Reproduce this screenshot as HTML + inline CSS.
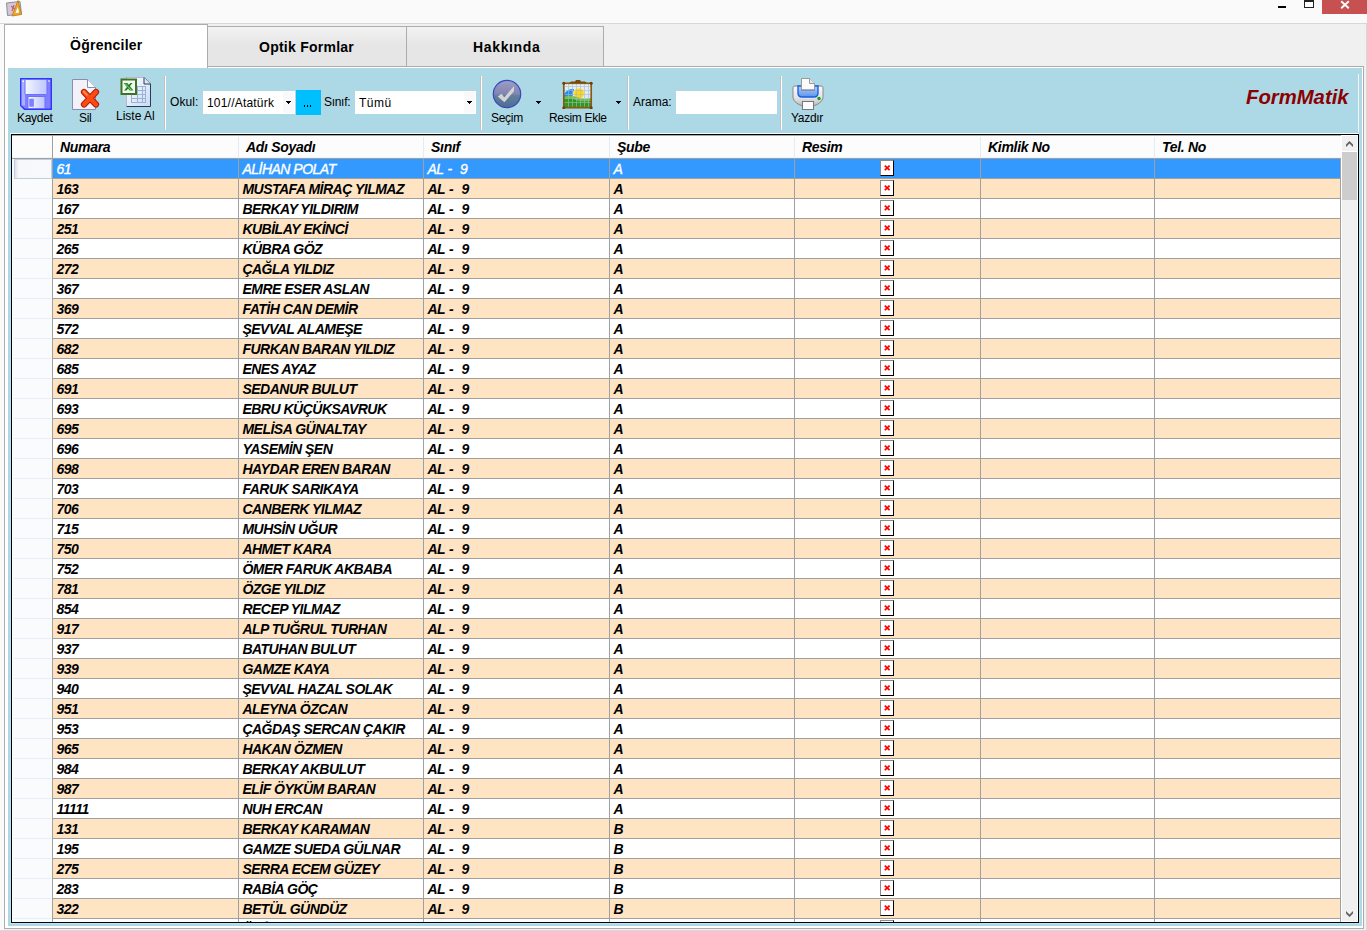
<!DOCTYPE html><html><head><meta charset="utf-8"><style>
*{margin:0;padding:0;box-sizing:border-box}
html,body{width:1367px;height:931px;overflow:hidden;background:#fafafa;font-family:"Liberation Sans",sans-serif;position:relative}
.abs{position:absolute}
#titleline{position:absolute;left:0;top:23px;width:1367px;height:1px;background:#d6d6d6}
#strip{position:absolute;left:0;top:24px;width:1367px;height:907px;background:#f0f0f0}
#winedge{position:absolute;left:1366px;top:24px;width:1px;height:907px;background:#d8d8d8}
#leftedge{position:absolute;left:0;top:24px;width:4px;height:907px;background:#fafafa}
#page{position:absolute;left:4px;top:66px;width:1360px;height:863px;border:1px solid #acacac;background:#fff}
#toolbar{position:absolute;left:8px;top:68px;width:1354px;height:858px;background:#add8e6}
.tab{position:absolute;border:1px solid #acacac;font-weight:bold;font-size:14px;letter-spacing:0.25px;color:#000;text-align:center;white-space:nowrap}
.tab.sel{left:4px;top:24px;width:204px;height:44px;border-bottom:none;background:#fff;z-index:3}
.tab.un{top:26px;height:41px;background:linear-gradient(#f2f2f2,#e6e6e6 45%,#e6e6e6)}
.tlbl{position:absolute;font-weight:bold;font-size:14px;letter-spacing:0.25px;white-space:nowrap;line-height:16px}
.tb{position:absolute;font-size:12px;letter-spacing:-0.3px;color:#000;white-space:nowrap;line-height:14px}
.sep{position:absolute;top:76px;width:2px;height:54px;border-left:1px solid #c8c0c0;border-right:1px solid #fff}
.combo{position:absolute;top:91px;height:23px;background:#fff}
.combo .dd{position:absolute;right:1px;top:1px;width:11px;height:21px;background:#f9f9f9}
.arrow{position:absolute;width:0;height:0;border-left:2.5px solid transparent;border-right:2.5px solid transparent;border-top:3px solid #000}
#grid{position:absolute;left:11px;top:134px;width:1348px;height:789px;border:1px solid #000;background:#fff;overflow:hidden;font-size:14px;letter-spacing:-0.3px;font-weight:bold;font-style:italic}
.hdr{position:absolute;left:0;top:0;width:1329px;height:24px;background:#fcfcfc;border-top:1px solid #ababab;border-bottom:1px solid #a0a0a0}
.hdr:after{content:"";position:absolute;left:0;top:21px;width:1329px;height:1px;background:#eef4fb}
.hc{position:absolute;top:-1px;height:23px;line-height:25px;padding-left:8px;white-space:nowrap}
.hc:before{content:"";position:absolute;left:0;top:2px;width:1px;height:20px;background:#e3ebf4}
.rhcol{position:absolute;left:0;top:24px;width:40px;height:770px;background:#fafbfc}
.vline52{position:absolute;left:40px;top:0;width:1px;height:790px;background:#a0a0a0;z-index:2}
.rh{position:absolute;left:2px;width:37px;height:20px;border-bottom:1px solid #e6eef8}
.rhsel{border:1px solid #c3cedd;background:linear-gradient(90deg,#dde4ee,#f6f8fb 4px,#f7f9fc);left:2px;width:38px;height:20px}
.row{letter-spacing:-0.5px;position:absolute;left:41px;width:1288px;height:20px;border-bottom:1px solid #a0a0a0;background:#fff;color:#000}
.row.alt{background:#ffe4c4}
.row.sel{background:#3399ff;color:#fff;font-weight:normal;-webkit-text-stroke:0.35px #fff}
.c{position:absolute;top:0;height:19px;line-height:21px;padding-left:3.4px;border-right:1px solid #a0a0a0;white-space:nowrap;overflow:hidden}
.c .t{position:relative;top:1px}
.bimg{position:absolute;left:85px;top:1px;width:14px;height:16px;background:#fff;border-top:1px solid #8c8c8c;border-left:1px solid #8c8c8c;border-right:1px solid #000;border-bottom:1px solid #000}
.bimg svg{position:absolute;left:3px;top:4px}
#vsb{position:absolute;left:1329px;top:0;width:17px;height:787px;background:#f0f0f0;border-left:1px solid #fff;border-right:1px solid #fff;border-top:1px solid #fff;border-bottom:1px solid #fff}
#vsb .thumb{position:absolute;left:0;top:16px;width:15px;height:48px;background:#cdcdcd}
#vsb .up,#vsb .dn{position:absolute;left:0;width:15px;height:15px}
#vsb .up{top:0;border-bottom:1px solid #fff;height:16px}
#vsb .dn{bottom:0}

#botedge{position:absolute;left:0;top:930px;width:1367px;height:1px;background:#d8d8d8}

</style></head><body>
<div id="titleline"></div>
<div id="strip"></div>
<div id="leftedge"></div>
<div id="winedge"></div>
<div id="botedge"></div>
<!-- app icon -->
<svg class="abs" style="left:5px;top:0px" width="18" height="17" viewBox="0 0 18 17">
  <path d="M1.5,3 L15,1.5 L16.5,14 L2.5,15.5 Z" fill="#c8ccd0" stroke="#8a9096" stroke-width="1"/>
  <path d="M4,4.5 L13,3.5 L14,12.5 L5,13.5 Z" fill="#f4b8e4"/>
  <path d="M6,6 L11,10 M9,5 L7,11" stroke="#8a7a60" stroke-width="1.2"/>
  <path d="M13,0.5 L7,16 L16.5,14.5 Z" fill="#e8a830" stroke="#c07810" stroke-width="0.8"/>
  <path d="M12.8,7 L10.5,13 L14,12.5 Z" fill="#ffffff"/>
</svg>
<!-- window buttons -->
<div class="abs" style="left:1278px;top:6px;width:8px;height:2px;background:#000"></div>
<div class="abs" style="left:1304px;top:0px;width:10px;height:8px;border:1px solid #222;border-top:2px solid #222;background:#fff"></div>
<div class="abs" style="left:1322px;top:0px;width:45px;height:14px;background:#c75050"></div>
<svg class="abs" style="left:1340px;top:0px" width="10" height="10" viewBox="0 0 10 10"><path d="M1.2,1.2 L8.8,8.2 M8.8,1.2 L1.2,8.2" stroke="#fff" stroke-width="1.9"/></svg>

<div id="page"></div>
<div id="toolbar"></div>
<div class="abs" style="left:10px;top:133px;width:1349px;height:1px;background:#f6fbfd"></div>
<div class="abs" style="left:10px;top:134px;width:1px;height:790px;background:#b8e3f3"></div>
<div class="abs" style="left:1359px;top:134px;width:1px;height:790px;background:#b8e3f3"></div>
<div class="abs" style="left:11px;top:923px;width:1348px;height:1px;background:#b8e3f3"></div>
<div class="tab un" style="left:207px;width:200px"></div>
<div class="tab un" style="left:406px;width:198px"></div>
<div class="tab sel"></div>
<div class="tlbl" style="left:70px;top:37px;z-index:4">Öğrenciler</div>
<div class="tlbl" style="left:259px;top:39px">Optik Formlar</div>
<div class="tlbl" style="left:473px;top:39px;letter-spacing:0.65px">Hakkında</div>

<!-- toolbar content -->
<svg class="abs" style="left:20px;top:78px" width="32" height="32" viewBox="0 0 32 32">
  <defs>
    <linearGradient id="flab" x1="0" x2="1"><stop offset="0" stop-color="#f6f8ff"/><stop offset="1" stop-color="#bcc4ff"/></linearGradient>
  </defs>
  <path d="M0.75,0.75 H31.25 V31.25 H4.5 L0.75,27.5 Z" fill="#7f80ff" stroke="#3434ff" stroke-width="1.5"/>
  <rect x="1.6" y="1.6" width="3.4" height="26" fill="#a8b0ff"/>
  <rect x="2.5" y="2.5" width="1.5" height="1.5" fill="#fff"/>
  <rect x="5" y="1.5" width="22" height="15" rx="0.8" fill="url(#flab)" stroke="#6a70ff" stroke-width="1"/>
  <rect x="28" y="2" width="2" height="2" fill="#b8c0ff"/>
  <rect x="8" y="18.5" width="17" height="12" fill="url(#flab)" stroke="#6a70ff" stroke-width="1"/>
  <rect x="9.2" y="20.8" width="4.7" height="8" rx="0.5" fill="#7f80ff"/>
</svg>
<div class="tb" style="left:17px;top:111px">Kaydet</div>

<svg class="abs" style="left:72px;top:79px" width="28" height="31" viewBox="0 0 28 31">
  <path d="M0.5,0.5 H15.5 L23.5,8.5 V30.5 H0.5 Z" fill="#f2f2f8" stroke="#8a8cb2" stroke-width="1"/>
  <path d="M15.5,0.5 V8.5 H23.5" fill="#fcfcff" stroke="#8a8cb2" stroke-width="1"/>
  <path d="M12,13 L24,25.5 M24,13 L12,25.5" stroke="#b01e08" stroke-width="6.2" stroke-linecap="round"/>
  <path d="M12,13 L24,25.5 M24,13 L12,25.5" stroke="#ff4a14" stroke-width="4.2" stroke-linecap="round"/>
  <path d="M11.6,12.4 L15,16" stroke="#ff9a60" stroke-width="1.6" stroke-linecap="round"/>
</svg>
<div class="tb" style="left:79px;top:111px">Sil</div>

<svg class="abs" style="left:120px;top:76px" width="32" height="32" viewBox="0 0 32 32">
  <defs><linearGradient id="xdoc" x1="0" y1="0" x2="1" y2="1"><stop offset="0" stop-color="#ffffff"/><stop offset="1" stop-color="#c8daf4"/></linearGradient></defs>
  <path d="M6.5,1.5 H24 L30.5,8 V30.5 H6.5 Z" fill="url(#xdoc)" stroke="#2a3a5a" stroke-width="1"/>
  <path d="M6.5,30.5 V1.5 H24" fill="none" stroke="#b4bccc" stroke-width="1"/>
  <path d="M24,1.5 V8 H30.5" fill="#dfe6f2" stroke="#2a3a5a" stroke-width="1"/>
  <g stroke="#9ab2d8" stroke-width="1" fill="none">
    <path d="M11,10.5 H26 M11,14.5 H26 M11,18.5 H26 M11,22.5 H26 M11,26.5 H26"/>
    <path d="M11.5,10 V27 M17.5,10 V27 M22.5,10 V27 M25.5,10 V27"/>
  </g>
  <rect x="1.5" y="3.5" width="14.5" height="14.5" fill="#f4faf2" stroke="#3c7424" stroke-width="2"/>
  <path d="M3.5,7 H7.5 L13.5,14.5 H9.5 Z" fill="#2a9a2a"/><path d="M12.5,7 H10.5 L4,14.5 H6.5 Z" fill="#1f7a1f"/><path d="M5,7.6 L11,14" stroke="#9ad89a" stroke-width="0.8"/>
</svg>
<div class="tb" style="left:116px;top:109px;letter-spacing:0px">Liste Al</div>

<div class="sep" style="left:164px"></div>
<div class="tb" style="left:170px;top:95px;letter-spacing:0.1px">Okul:</div>
<div class="combo" style="left:203px;width:92px"><div class="dd"></div></div><svg class="abs" style="left:286px;top:101px" width="5" height="3" shape-rendering="crispEdges"><path d="M0,0H5V1H4V2H3V3H2V2H1V1H0Z" fill="#000"/></svg>
<div class="tb" style="left:207px;top:96px;letter-spacing:0.2px">101//Atatürk</div>
<div class="abs" style="left:296px;top:90px;width:25px;height:25px;background:#00bfff"></div>
<div class="abs" style="left:304px;top:105px;width:1px;height:2px;background:#000"></div>
<div class="abs" style="left:307px;top:105px;width:1px;height:2px;background:#000"></div>
<div class="abs" style="left:310px;top:105px;width:1px;height:2px;background:#000"></div>
<div class="tb" style="left:324px;top:95px">Sınıf:</div>
<div class="combo" style="left:355px;width:121px"><div class="dd"></div></div><svg class="abs" style="left:467px;top:101px" width="5" height="3" shape-rendering="crispEdges"><path d="M0,0H5V1H4V2H3V3H2V2H1V1H0Z" fill="#000"/></svg>
<div class="tb" style="left:359px;top:96px;letter-spacing:0.5px">Tümü</div>

<div class="sep" style="left:480px"></div>
<svg class="abs" style="left:492px;top:79px" width="30" height="30" viewBox="0 0 30 30">
  <defs>
    <linearGradient id="cg" x1="0" y1="0" x2="0" y2="1"><stop offset="0" stop-color="#9a9ec4"/><stop offset="0.5" stop-color="#8484b4"/><stop offset="0.55" stop-color="#62809c"/><stop offset="1" stop-color="#4e6c94"/></linearGradient>
  </defs>
  <circle cx="15" cy="15" r="13.7" fill="url(#cg)" stroke="#3848bc" stroke-width="1.2"/>
  <path d="M5.7,17.4 L9.7,14.8 L12.2,18.5 L22,7 L22,12.2 L12.4,23.2 Z" fill="#d4d4d4"/>
</svg>
<svg class="abs" style="left:536px;top:101px" width="5" height="3" shape-rendering="crispEdges"><path d="M0,0H5V1H4V2H3V3H2V2H1V1H0Z" fill="#000"/></svg>
<div class="tb" style="left:491px;top:111px">Seçim</div>

<svg class="abs" style="left:562px;top:79px" width="32" height="30" viewBox="0 0 32 30">
  <defs>
    <linearGradient id="sky" x1="0" y1="0" x2="0" y2="1"><stop offset="0" stop-color="#e4f2fc"/><stop offset="1" stop-color="#c8e6f8"/></linearGradient>
    <radialGradient id="sun" cx="0.5" cy="0.5" r="0.5"><stop offset="0" stop-color="#ffe000"/><stop offset="0.7" stop-color="#ffd21a"/><stop offset="1" stop-color="#fff0b0"/></radialGradient>
  </defs>
  <rect x="2" y="5" width="27" height="23" fill="url(#sky)"/>
  <path d="M2,15.5 Q5,9.5 12,10 L11,17 L2,18 Z" fill="#2090f0"/>
  <circle cx="17" cy="14.5" r="5.8" fill="url(#sun)"/>
  <path d="M2,18 Q9,15.5 16,18.5 Q22,21 29,19 V28 H2 Z" fill="#6cc050"/>
  <path d="M2,20 Q8,18 15,21.5 Q21,23 29,22 V28 H2 Z" fill="#2c9a1a"/>
  <g stroke="#b0b8c0" stroke-width="0.8" opacity="0.75">
    <path d="M6.5,5 V28 M10.5,5 V28 M14.5,5 V28 M18.5,5 V28 M22.5,5 V28 M26.5,5 V28"/>
    <path d="M2,7.5 H29 M2,11.5 H29 M2,15.5 H29 M2,19.5 H29 M2,23.5 H29"/>
  </g>
  <rect x="1.8" y="4.3" width="27.4" height="24.4" fill="none" stroke="#8a5a14" stroke-width="1.7"/>
  <path d="M7,4 L9,2.5 H13 L14,1 H18 L19,2.5 H23 L25,4 Z" fill="#7a4a0c"/>
  <circle cx="1.8" cy="4.3" r="1.5" fill="#6a400a"/><circle cx="29.2" cy="4.3" r="1.5" fill="#6a400a"/>
  <circle cx="1.8" cy="28.7" r="1.5" fill="#6a400a"/><circle cx="29.2" cy="28.7" r="1.5" fill="#6a400a"/>
</svg>
<svg class="abs" style="left:616px;top:101px" width="5" height="3" shape-rendering="crispEdges"><path d="M0,0H5V1H4V2H3V3H2V2H1V1H0Z" fill="#000"/></svg>
<div class="tb" style="left:549px;top:111px">Resim Ekle</div>

<div class="sep" style="left:627px"></div>
<div class="tb" style="left:633px;top:95px;letter-spacing:0px">Arama:</div>
<div class="abs" style="left:676px;top:91px;width:101px;height:23px;background:#fff"></div>
<div class="sep" style="left:780px"></div>

<svg class="abs" style="left:791px;top:77px" width="34" height="34" viewBox="0 0 34 34">
  <defs>
    <linearGradient id="pb" x1="0" y1="0" x2="0" y2="1"><stop offset="0" stop-color="#fafafa"/><stop offset="0.6" stop-color="#e4e4e4"/><stop offset="1" stop-color="#b8b8b8"/></linearGradient>
    <linearGradient id="pt" x1="0" y1="0" x2="0" y2="1"><stop offset="0" stop-color="#b4d0fa"/><stop offset="1" stop-color="#5a94ec"/></linearGradient>
  </defs>
  <path d="M2,10.5 Q2,9 4,9 H30 Q32,9 32,10.5 V21 Q30,27 22,29 H12 Q4,27 2,21 Z" fill="url(#pb)" stroke="#888" stroke-width="1"/>
  <path d="M7,9 H27 V16 Q27,20 23,20 H11 Q7,20 7,16 Z" fill="url(#pt)" stroke="#1a5ee8" stroke-width="1.4"/>
  <path d="M10.5,1.5 H18.5 L23.5,6.5 V13 H10.5 Z" fill="#fbfbfb" stroke="#9a9a9a" stroke-width="1"/>
  <path d="M18.5,1.5 V6.5 H23.5" fill="#e8e8e8" stroke="#9a9a9a" stroke-width="1"/>
  <rect x="10" y="12.5" width="14" height="1.5" fill="#8a8ab0"/>
  <circle cx="28" cy="21.5" r="1.7" fill="#10a010"/>
  <rect x="11.5" y="24.5" width="11" height="8" fill="#fdfdfd" stroke="#777" stroke-width="1"/>
</svg>
<div class="tb" style="left:791px;top:111px">Yazdır</div>

<div class="abs" style="left:1358px;top:74px;width:1px;height:58px;background:#f4f4f4"></div>
<div class="abs" style="left:1246px;top:85px;font-size:20.3px;font-weight:bold;font-style:italic;color:#8b0000;line-height:24px;white-space:nowrap">FormMatik</div>

<div id="grid">
<div class="rhcol"></div><div class="vline52"></div>
<div class="hdr">
<div class="hc" style="left:40px;width:186px"><span>Numara</span></div>
<div class="hc" style="left:226px;width:185px"><span>Adı Soyadı</span></div>
<div class="hc" style="left:411px;width:186px"><span>Sınıf</span></div>
<div class="hc" style="left:597px;width:185px"><span>Şube</span></div>
<div class="hc" style="left:782px;width:186px"><span>Resim</span></div>
<div class="hc" style="left:968px;width:174px"><span>Kimlik No</span></div>
<div class="hc" style="left:1142px;width:186px"><span>Tel. No</span></div>
</div>
<div class="rh rhsel" style="top:24px"></div>
<div class="row sel" style="top:24px">
<div class="c" style="left:0px;width:186px">61</div>
<div class="c" style="left:186px;width:185px">ALİHAN POLAT</div>
<div class="c" style="left:371px;width:186px;word-spacing:0.8px">AL -&nbsp; 9</div>
<div class="c" style="left:557px;width:185px">A</div>
<div class="c" style="left:742px;width:186px"><i class="bimg"><svg width="7" height="7"><path d="M0.8,0.6 L5.6,5.2 M5.6,0.6 L0.8,5.2" stroke="#f00" stroke-width="1.7"/></svg></i></div>
<div class="c" style="left:928px;width:174px"></div>
<div class="c" style="left:1102px;width:186px"></div>
</div>
<div class="rh" style="top:44px"></div>
<div class="row alt" style="top:44px">
<div class="c" style="left:0px;width:186px">163</div>
<div class="c" style="left:186px;width:185px">MUSTAFA MİRAÇ YILMAZ</div>
<div class="c" style="left:371px;width:186px;word-spacing:0.8px">AL -&nbsp; 9</div>
<div class="c" style="left:557px;width:185px">A</div>
<div class="c" style="left:742px;width:186px"><i class="bimg"><svg width="7" height="7"><path d="M0.8,0.6 L5.6,5.2 M5.6,0.6 L0.8,5.2" stroke="#f00" stroke-width="1.7"/></svg></i></div>
<div class="c" style="left:928px;width:174px"></div>
<div class="c" style="left:1102px;width:186px"></div>
</div>
<div class="rh" style="top:64px"></div>
<div class="row" style="top:64px">
<div class="c" style="left:0px;width:186px">167</div>
<div class="c" style="left:186px;width:185px">BERKAY YILDIRIM</div>
<div class="c" style="left:371px;width:186px;word-spacing:0.8px">AL -&nbsp; 9</div>
<div class="c" style="left:557px;width:185px">A</div>
<div class="c" style="left:742px;width:186px"><i class="bimg"><svg width="7" height="7"><path d="M0.8,0.6 L5.6,5.2 M5.6,0.6 L0.8,5.2" stroke="#f00" stroke-width="1.7"/></svg></i></div>
<div class="c" style="left:928px;width:174px"></div>
<div class="c" style="left:1102px;width:186px"></div>
</div>
<div class="rh" style="top:84px"></div>
<div class="row alt" style="top:84px">
<div class="c" style="left:0px;width:186px">251</div>
<div class="c" style="left:186px;width:185px">KUBİLAY EKİNCİ</div>
<div class="c" style="left:371px;width:186px;word-spacing:0.8px">AL -&nbsp; 9</div>
<div class="c" style="left:557px;width:185px">A</div>
<div class="c" style="left:742px;width:186px"><i class="bimg"><svg width="7" height="7"><path d="M0.8,0.6 L5.6,5.2 M5.6,0.6 L0.8,5.2" stroke="#f00" stroke-width="1.7"/></svg></i></div>
<div class="c" style="left:928px;width:174px"></div>
<div class="c" style="left:1102px;width:186px"></div>
</div>
<div class="rh" style="top:104px"></div>
<div class="row" style="top:104px">
<div class="c" style="left:0px;width:186px">265</div>
<div class="c" style="left:186px;width:185px">KÜBRA GÖZ</div>
<div class="c" style="left:371px;width:186px;word-spacing:0.8px">AL -&nbsp; 9</div>
<div class="c" style="left:557px;width:185px">A</div>
<div class="c" style="left:742px;width:186px"><i class="bimg"><svg width="7" height="7"><path d="M0.8,0.6 L5.6,5.2 M5.6,0.6 L0.8,5.2" stroke="#f00" stroke-width="1.7"/></svg></i></div>
<div class="c" style="left:928px;width:174px"></div>
<div class="c" style="left:1102px;width:186px"></div>
</div>
<div class="rh" style="top:124px"></div>
<div class="row alt" style="top:124px">
<div class="c" style="left:0px;width:186px">272</div>
<div class="c" style="left:186px;width:185px">ÇAĞLA YILDIZ</div>
<div class="c" style="left:371px;width:186px;word-spacing:0.8px">AL -&nbsp; 9</div>
<div class="c" style="left:557px;width:185px">A</div>
<div class="c" style="left:742px;width:186px"><i class="bimg"><svg width="7" height="7"><path d="M0.8,0.6 L5.6,5.2 M5.6,0.6 L0.8,5.2" stroke="#f00" stroke-width="1.7"/></svg></i></div>
<div class="c" style="left:928px;width:174px"></div>
<div class="c" style="left:1102px;width:186px"></div>
</div>
<div class="rh" style="top:144px"></div>
<div class="row" style="top:144px">
<div class="c" style="left:0px;width:186px">367</div>
<div class="c" style="left:186px;width:185px">EMRE ESER ASLAN</div>
<div class="c" style="left:371px;width:186px;word-spacing:0.8px">AL -&nbsp; 9</div>
<div class="c" style="left:557px;width:185px">A</div>
<div class="c" style="left:742px;width:186px"><i class="bimg"><svg width="7" height="7"><path d="M0.8,0.6 L5.6,5.2 M5.6,0.6 L0.8,5.2" stroke="#f00" stroke-width="1.7"/></svg></i></div>
<div class="c" style="left:928px;width:174px"></div>
<div class="c" style="left:1102px;width:186px"></div>
</div>
<div class="rh" style="top:164px"></div>
<div class="row alt" style="top:164px">
<div class="c" style="left:0px;width:186px">369</div>
<div class="c" style="left:186px;width:185px">FATİH CAN DEMİR</div>
<div class="c" style="left:371px;width:186px;word-spacing:0.8px">AL -&nbsp; 9</div>
<div class="c" style="left:557px;width:185px">A</div>
<div class="c" style="left:742px;width:186px"><i class="bimg"><svg width="7" height="7"><path d="M0.8,0.6 L5.6,5.2 M5.6,0.6 L0.8,5.2" stroke="#f00" stroke-width="1.7"/></svg></i></div>
<div class="c" style="left:928px;width:174px"></div>
<div class="c" style="left:1102px;width:186px"></div>
</div>
<div class="rh" style="top:184px"></div>
<div class="row" style="top:184px">
<div class="c" style="left:0px;width:186px">572</div>
<div class="c" style="left:186px;width:185px">ŞEVVAL ALAMEŞE</div>
<div class="c" style="left:371px;width:186px;word-spacing:0.8px">AL -&nbsp; 9</div>
<div class="c" style="left:557px;width:185px">A</div>
<div class="c" style="left:742px;width:186px"><i class="bimg"><svg width="7" height="7"><path d="M0.8,0.6 L5.6,5.2 M5.6,0.6 L0.8,5.2" stroke="#f00" stroke-width="1.7"/></svg></i></div>
<div class="c" style="left:928px;width:174px"></div>
<div class="c" style="left:1102px;width:186px"></div>
</div>
<div class="rh" style="top:204px"></div>
<div class="row alt" style="top:204px">
<div class="c" style="left:0px;width:186px">682</div>
<div class="c" style="left:186px;width:185px">FURKAN BARAN YILDIZ</div>
<div class="c" style="left:371px;width:186px;word-spacing:0.8px">AL -&nbsp; 9</div>
<div class="c" style="left:557px;width:185px">A</div>
<div class="c" style="left:742px;width:186px"><i class="bimg"><svg width="7" height="7"><path d="M0.8,0.6 L5.6,5.2 M5.6,0.6 L0.8,5.2" stroke="#f00" stroke-width="1.7"/></svg></i></div>
<div class="c" style="left:928px;width:174px"></div>
<div class="c" style="left:1102px;width:186px"></div>
</div>
<div class="rh" style="top:224px"></div>
<div class="row" style="top:224px">
<div class="c" style="left:0px;width:186px">685</div>
<div class="c" style="left:186px;width:185px">ENES AYAZ</div>
<div class="c" style="left:371px;width:186px;word-spacing:0.8px">AL -&nbsp; 9</div>
<div class="c" style="left:557px;width:185px">A</div>
<div class="c" style="left:742px;width:186px"><i class="bimg"><svg width="7" height="7"><path d="M0.8,0.6 L5.6,5.2 M5.6,0.6 L0.8,5.2" stroke="#f00" stroke-width="1.7"/></svg></i></div>
<div class="c" style="left:928px;width:174px"></div>
<div class="c" style="left:1102px;width:186px"></div>
</div>
<div class="rh" style="top:244px"></div>
<div class="row alt" style="top:244px">
<div class="c" style="left:0px;width:186px">691</div>
<div class="c" style="left:186px;width:185px">SEDANUR BULUT</div>
<div class="c" style="left:371px;width:186px;word-spacing:0.8px">AL -&nbsp; 9</div>
<div class="c" style="left:557px;width:185px">A</div>
<div class="c" style="left:742px;width:186px"><i class="bimg"><svg width="7" height="7"><path d="M0.8,0.6 L5.6,5.2 M5.6,0.6 L0.8,5.2" stroke="#f00" stroke-width="1.7"/></svg></i></div>
<div class="c" style="left:928px;width:174px"></div>
<div class="c" style="left:1102px;width:186px"></div>
</div>
<div class="rh" style="top:264px"></div>
<div class="row" style="top:264px">
<div class="c" style="left:0px;width:186px">693</div>
<div class="c" style="left:186px;width:185px">EBRU KÜÇÜKSAVRUK</div>
<div class="c" style="left:371px;width:186px;word-spacing:0.8px">AL -&nbsp; 9</div>
<div class="c" style="left:557px;width:185px">A</div>
<div class="c" style="left:742px;width:186px"><i class="bimg"><svg width="7" height="7"><path d="M0.8,0.6 L5.6,5.2 M5.6,0.6 L0.8,5.2" stroke="#f00" stroke-width="1.7"/></svg></i></div>
<div class="c" style="left:928px;width:174px"></div>
<div class="c" style="left:1102px;width:186px"></div>
</div>
<div class="rh" style="top:284px"></div>
<div class="row alt" style="top:284px">
<div class="c" style="left:0px;width:186px">695</div>
<div class="c" style="left:186px;width:185px">MELİSA GÜNALTAY</div>
<div class="c" style="left:371px;width:186px;word-spacing:0.8px">AL -&nbsp; 9</div>
<div class="c" style="left:557px;width:185px">A</div>
<div class="c" style="left:742px;width:186px"><i class="bimg"><svg width="7" height="7"><path d="M0.8,0.6 L5.6,5.2 M5.6,0.6 L0.8,5.2" stroke="#f00" stroke-width="1.7"/></svg></i></div>
<div class="c" style="left:928px;width:174px"></div>
<div class="c" style="left:1102px;width:186px"></div>
</div>
<div class="rh" style="top:304px"></div>
<div class="row" style="top:304px">
<div class="c" style="left:0px;width:186px">696</div>
<div class="c" style="left:186px;width:185px">YASEMİN ŞEN</div>
<div class="c" style="left:371px;width:186px;word-spacing:0.8px">AL -&nbsp; 9</div>
<div class="c" style="left:557px;width:185px">A</div>
<div class="c" style="left:742px;width:186px"><i class="bimg"><svg width="7" height="7"><path d="M0.8,0.6 L5.6,5.2 M5.6,0.6 L0.8,5.2" stroke="#f00" stroke-width="1.7"/></svg></i></div>
<div class="c" style="left:928px;width:174px"></div>
<div class="c" style="left:1102px;width:186px"></div>
</div>
<div class="rh" style="top:324px"></div>
<div class="row alt" style="top:324px">
<div class="c" style="left:0px;width:186px">698</div>
<div class="c" style="left:186px;width:185px">HAYDAR EREN BARAN</div>
<div class="c" style="left:371px;width:186px;word-spacing:0.8px">AL -&nbsp; 9</div>
<div class="c" style="left:557px;width:185px">A</div>
<div class="c" style="left:742px;width:186px"><i class="bimg"><svg width="7" height="7"><path d="M0.8,0.6 L5.6,5.2 M5.6,0.6 L0.8,5.2" stroke="#f00" stroke-width="1.7"/></svg></i></div>
<div class="c" style="left:928px;width:174px"></div>
<div class="c" style="left:1102px;width:186px"></div>
</div>
<div class="rh" style="top:344px"></div>
<div class="row" style="top:344px">
<div class="c" style="left:0px;width:186px">703</div>
<div class="c" style="left:186px;width:185px">FARUK SARIKAYA</div>
<div class="c" style="left:371px;width:186px;word-spacing:0.8px">AL -&nbsp; 9</div>
<div class="c" style="left:557px;width:185px">A</div>
<div class="c" style="left:742px;width:186px"><i class="bimg"><svg width="7" height="7"><path d="M0.8,0.6 L5.6,5.2 M5.6,0.6 L0.8,5.2" stroke="#f00" stroke-width="1.7"/></svg></i></div>
<div class="c" style="left:928px;width:174px"></div>
<div class="c" style="left:1102px;width:186px"></div>
</div>
<div class="rh" style="top:364px"></div>
<div class="row alt" style="top:364px">
<div class="c" style="left:0px;width:186px">706</div>
<div class="c" style="left:186px;width:185px">CANBERK YILMAZ</div>
<div class="c" style="left:371px;width:186px;word-spacing:0.8px">AL -&nbsp; 9</div>
<div class="c" style="left:557px;width:185px">A</div>
<div class="c" style="left:742px;width:186px"><i class="bimg"><svg width="7" height="7"><path d="M0.8,0.6 L5.6,5.2 M5.6,0.6 L0.8,5.2" stroke="#f00" stroke-width="1.7"/></svg></i></div>
<div class="c" style="left:928px;width:174px"></div>
<div class="c" style="left:1102px;width:186px"></div>
</div>
<div class="rh" style="top:384px"></div>
<div class="row" style="top:384px">
<div class="c" style="left:0px;width:186px">715</div>
<div class="c" style="left:186px;width:185px">MUHSİN UĞUR</div>
<div class="c" style="left:371px;width:186px;word-spacing:0.8px">AL -&nbsp; 9</div>
<div class="c" style="left:557px;width:185px">A</div>
<div class="c" style="left:742px;width:186px"><i class="bimg"><svg width="7" height="7"><path d="M0.8,0.6 L5.6,5.2 M5.6,0.6 L0.8,5.2" stroke="#f00" stroke-width="1.7"/></svg></i></div>
<div class="c" style="left:928px;width:174px"></div>
<div class="c" style="left:1102px;width:186px"></div>
</div>
<div class="rh" style="top:404px"></div>
<div class="row alt" style="top:404px">
<div class="c" style="left:0px;width:186px">750</div>
<div class="c" style="left:186px;width:185px">AHMET KARA</div>
<div class="c" style="left:371px;width:186px;word-spacing:0.8px">AL -&nbsp; 9</div>
<div class="c" style="left:557px;width:185px">A</div>
<div class="c" style="left:742px;width:186px"><i class="bimg"><svg width="7" height="7"><path d="M0.8,0.6 L5.6,5.2 M5.6,0.6 L0.8,5.2" stroke="#f00" stroke-width="1.7"/></svg></i></div>
<div class="c" style="left:928px;width:174px"></div>
<div class="c" style="left:1102px;width:186px"></div>
</div>
<div class="rh" style="top:424px"></div>
<div class="row" style="top:424px">
<div class="c" style="left:0px;width:186px">752</div>
<div class="c" style="left:186px;width:185px">ÖMER FARUK AKBABA</div>
<div class="c" style="left:371px;width:186px;word-spacing:0.8px">AL -&nbsp; 9</div>
<div class="c" style="left:557px;width:185px">A</div>
<div class="c" style="left:742px;width:186px"><i class="bimg"><svg width="7" height="7"><path d="M0.8,0.6 L5.6,5.2 M5.6,0.6 L0.8,5.2" stroke="#f00" stroke-width="1.7"/></svg></i></div>
<div class="c" style="left:928px;width:174px"></div>
<div class="c" style="left:1102px;width:186px"></div>
</div>
<div class="rh" style="top:444px"></div>
<div class="row alt" style="top:444px">
<div class="c" style="left:0px;width:186px">781</div>
<div class="c" style="left:186px;width:185px">ÖZGE YILDIZ</div>
<div class="c" style="left:371px;width:186px;word-spacing:0.8px">AL -&nbsp; 9</div>
<div class="c" style="left:557px;width:185px">A</div>
<div class="c" style="left:742px;width:186px"><i class="bimg"><svg width="7" height="7"><path d="M0.8,0.6 L5.6,5.2 M5.6,0.6 L0.8,5.2" stroke="#f00" stroke-width="1.7"/></svg></i></div>
<div class="c" style="left:928px;width:174px"></div>
<div class="c" style="left:1102px;width:186px"></div>
</div>
<div class="rh" style="top:464px"></div>
<div class="row" style="top:464px">
<div class="c" style="left:0px;width:186px">854</div>
<div class="c" style="left:186px;width:185px">RECEP YILMAZ</div>
<div class="c" style="left:371px;width:186px;word-spacing:0.8px">AL -&nbsp; 9</div>
<div class="c" style="left:557px;width:185px">A</div>
<div class="c" style="left:742px;width:186px"><i class="bimg"><svg width="7" height="7"><path d="M0.8,0.6 L5.6,5.2 M5.6,0.6 L0.8,5.2" stroke="#f00" stroke-width="1.7"/></svg></i></div>
<div class="c" style="left:928px;width:174px"></div>
<div class="c" style="left:1102px;width:186px"></div>
</div>
<div class="rh" style="top:484px"></div>
<div class="row alt" style="top:484px">
<div class="c" style="left:0px;width:186px">917</div>
<div class="c" style="left:186px;width:185px">ALP TUĞRUL TURHAN</div>
<div class="c" style="left:371px;width:186px;word-spacing:0.8px">AL -&nbsp; 9</div>
<div class="c" style="left:557px;width:185px">A</div>
<div class="c" style="left:742px;width:186px"><i class="bimg"><svg width="7" height="7"><path d="M0.8,0.6 L5.6,5.2 M5.6,0.6 L0.8,5.2" stroke="#f00" stroke-width="1.7"/></svg></i></div>
<div class="c" style="left:928px;width:174px"></div>
<div class="c" style="left:1102px;width:186px"></div>
</div>
<div class="rh" style="top:504px"></div>
<div class="row" style="top:504px">
<div class="c" style="left:0px;width:186px">937</div>
<div class="c" style="left:186px;width:185px">BATUHAN BULUT</div>
<div class="c" style="left:371px;width:186px;word-spacing:0.8px">AL -&nbsp; 9</div>
<div class="c" style="left:557px;width:185px">A</div>
<div class="c" style="left:742px;width:186px"><i class="bimg"><svg width="7" height="7"><path d="M0.8,0.6 L5.6,5.2 M5.6,0.6 L0.8,5.2" stroke="#f00" stroke-width="1.7"/></svg></i></div>
<div class="c" style="left:928px;width:174px"></div>
<div class="c" style="left:1102px;width:186px"></div>
</div>
<div class="rh" style="top:524px"></div>
<div class="row alt" style="top:524px">
<div class="c" style="left:0px;width:186px">939</div>
<div class="c" style="left:186px;width:185px">GAMZE KAYA</div>
<div class="c" style="left:371px;width:186px;word-spacing:0.8px">AL -&nbsp; 9</div>
<div class="c" style="left:557px;width:185px">A</div>
<div class="c" style="left:742px;width:186px"><i class="bimg"><svg width="7" height="7"><path d="M0.8,0.6 L5.6,5.2 M5.6,0.6 L0.8,5.2" stroke="#f00" stroke-width="1.7"/></svg></i></div>
<div class="c" style="left:928px;width:174px"></div>
<div class="c" style="left:1102px;width:186px"></div>
</div>
<div class="rh" style="top:544px"></div>
<div class="row" style="top:544px">
<div class="c" style="left:0px;width:186px">940</div>
<div class="c" style="left:186px;width:185px">ŞEVVAL HAZAL SOLAK</div>
<div class="c" style="left:371px;width:186px;word-spacing:0.8px">AL -&nbsp; 9</div>
<div class="c" style="left:557px;width:185px">A</div>
<div class="c" style="left:742px;width:186px"><i class="bimg"><svg width="7" height="7"><path d="M0.8,0.6 L5.6,5.2 M5.6,0.6 L0.8,5.2" stroke="#f00" stroke-width="1.7"/></svg></i></div>
<div class="c" style="left:928px;width:174px"></div>
<div class="c" style="left:1102px;width:186px"></div>
</div>
<div class="rh" style="top:564px"></div>
<div class="row alt" style="top:564px">
<div class="c" style="left:0px;width:186px">951</div>
<div class="c" style="left:186px;width:185px">ALEYNA ÖZCAN</div>
<div class="c" style="left:371px;width:186px;word-spacing:0.8px">AL -&nbsp; 9</div>
<div class="c" style="left:557px;width:185px">A</div>
<div class="c" style="left:742px;width:186px"><i class="bimg"><svg width="7" height="7"><path d="M0.8,0.6 L5.6,5.2 M5.6,0.6 L0.8,5.2" stroke="#f00" stroke-width="1.7"/></svg></i></div>
<div class="c" style="left:928px;width:174px"></div>
<div class="c" style="left:1102px;width:186px"></div>
</div>
<div class="rh" style="top:584px"></div>
<div class="row" style="top:584px">
<div class="c" style="left:0px;width:186px">953</div>
<div class="c" style="left:186px;width:185px">ÇAĞDAŞ SERCAN ÇAKIR</div>
<div class="c" style="left:371px;width:186px;word-spacing:0.8px">AL -&nbsp; 9</div>
<div class="c" style="left:557px;width:185px">A</div>
<div class="c" style="left:742px;width:186px"><i class="bimg"><svg width="7" height="7"><path d="M0.8,0.6 L5.6,5.2 M5.6,0.6 L0.8,5.2" stroke="#f00" stroke-width="1.7"/></svg></i></div>
<div class="c" style="left:928px;width:174px"></div>
<div class="c" style="left:1102px;width:186px"></div>
</div>
<div class="rh" style="top:604px"></div>
<div class="row alt" style="top:604px">
<div class="c" style="left:0px;width:186px">965</div>
<div class="c" style="left:186px;width:185px">HAKAN ÖZMEN</div>
<div class="c" style="left:371px;width:186px;word-spacing:0.8px">AL -&nbsp; 9</div>
<div class="c" style="left:557px;width:185px">A</div>
<div class="c" style="left:742px;width:186px"><i class="bimg"><svg width="7" height="7"><path d="M0.8,0.6 L5.6,5.2 M5.6,0.6 L0.8,5.2" stroke="#f00" stroke-width="1.7"/></svg></i></div>
<div class="c" style="left:928px;width:174px"></div>
<div class="c" style="left:1102px;width:186px"></div>
</div>
<div class="rh" style="top:624px"></div>
<div class="row" style="top:624px">
<div class="c" style="left:0px;width:186px">984</div>
<div class="c" style="left:186px;width:185px">BERKAY AKBULUT</div>
<div class="c" style="left:371px;width:186px;word-spacing:0.8px">AL -&nbsp; 9</div>
<div class="c" style="left:557px;width:185px">A</div>
<div class="c" style="left:742px;width:186px"><i class="bimg"><svg width="7" height="7"><path d="M0.8,0.6 L5.6,5.2 M5.6,0.6 L0.8,5.2" stroke="#f00" stroke-width="1.7"/></svg></i></div>
<div class="c" style="left:928px;width:174px"></div>
<div class="c" style="left:1102px;width:186px"></div>
</div>
<div class="rh" style="top:644px"></div>
<div class="row alt" style="top:644px">
<div class="c" style="left:0px;width:186px">987</div>
<div class="c" style="left:186px;width:185px">ELİF ÖYKÜM BARAN</div>
<div class="c" style="left:371px;width:186px;word-spacing:0.8px">AL -&nbsp; 9</div>
<div class="c" style="left:557px;width:185px">A</div>
<div class="c" style="left:742px;width:186px"><i class="bimg"><svg width="7" height="7"><path d="M0.8,0.6 L5.6,5.2 M5.6,0.6 L0.8,5.2" stroke="#f00" stroke-width="1.7"/></svg></i></div>
<div class="c" style="left:928px;width:174px"></div>
<div class="c" style="left:1102px;width:186px"></div>
</div>
<div class="rh" style="top:664px"></div>
<div class="row" style="top:664px">
<div class="c" style="left:0px;width:186px">11111</div>
<div class="c" style="left:186px;width:185px">NUH ERCAN</div>
<div class="c" style="left:371px;width:186px;word-spacing:0.8px">AL -&nbsp; 9</div>
<div class="c" style="left:557px;width:185px">A</div>
<div class="c" style="left:742px;width:186px"><i class="bimg"><svg width="7" height="7"><path d="M0.8,0.6 L5.6,5.2 M5.6,0.6 L0.8,5.2" stroke="#f00" stroke-width="1.7"/></svg></i></div>
<div class="c" style="left:928px;width:174px"></div>
<div class="c" style="left:1102px;width:186px"></div>
</div>
<div class="rh" style="top:684px"></div>
<div class="row alt" style="top:684px">
<div class="c" style="left:0px;width:186px">131</div>
<div class="c" style="left:186px;width:185px">BERKAY KARAMAN</div>
<div class="c" style="left:371px;width:186px;word-spacing:0.8px">AL -&nbsp; 9</div>
<div class="c" style="left:557px;width:185px">B</div>
<div class="c" style="left:742px;width:186px"><i class="bimg"><svg width="7" height="7"><path d="M0.8,0.6 L5.6,5.2 M5.6,0.6 L0.8,5.2" stroke="#f00" stroke-width="1.7"/></svg></i></div>
<div class="c" style="left:928px;width:174px"></div>
<div class="c" style="left:1102px;width:186px"></div>
</div>
<div class="rh" style="top:704px"></div>
<div class="row" style="top:704px">
<div class="c" style="left:0px;width:186px">195</div>
<div class="c" style="left:186px;width:185px">GAMZE SUEDA GÜLNAR</div>
<div class="c" style="left:371px;width:186px;word-spacing:0.8px">AL -&nbsp; 9</div>
<div class="c" style="left:557px;width:185px">B</div>
<div class="c" style="left:742px;width:186px"><i class="bimg"><svg width="7" height="7"><path d="M0.8,0.6 L5.6,5.2 M5.6,0.6 L0.8,5.2" stroke="#f00" stroke-width="1.7"/></svg></i></div>
<div class="c" style="left:928px;width:174px"></div>
<div class="c" style="left:1102px;width:186px"></div>
</div>
<div class="rh" style="top:724px"></div>
<div class="row alt" style="top:724px">
<div class="c" style="left:0px;width:186px">275</div>
<div class="c" style="left:186px;width:185px">SERRA ECEM GÜZEY</div>
<div class="c" style="left:371px;width:186px;word-spacing:0.8px">AL -&nbsp; 9</div>
<div class="c" style="left:557px;width:185px">B</div>
<div class="c" style="left:742px;width:186px"><i class="bimg"><svg width="7" height="7"><path d="M0.8,0.6 L5.6,5.2 M5.6,0.6 L0.8,5.2" stroke="#f00" stroke-width="1.7"/></svg></i></div>
<div class="c" style="left:928px;width:174px"></div>
<div class="c" style="left:1102px;width:186px"></div>
</div>
<div class="rh" style="top:744px"></div>
<div class="row" style="top:744px">
<div class="c" style="left:0px;width:186px">283</div>
<div class="c" style="left:186px;width:185px">RABİA GÖÇ</div>
<div class="c" style="left:371px;width:186px;word-spacing:0.8px">AL -&nbsp; 9</div>
<div class="c" style="left:557px;width:185px">B</div>
<div class="c" style="left:742px;width:186px"><i class="bimg"><svg width="7" height="7"><path d="M0.8,0.6 L5.6,5.2 M5.6,0.6 L0.8,5.2" stroke="#f00" stroke-width="1.7"/></svg></i></div>
<div class="c" style="left:928px;width:174px"></div>
<div class="c" style="left:1102px;width:186px"></div>
</div>
<div class="rh" style="top:764px"></div>
<div class="row alt" style="top:764px">
<div class="c" style="left:0px;width:186px">322</div>
<div class="c" style="left:186px;width:185px">BETÜL GÜNDÜZ</div>
<div class="c" style="left:371px;width:186px;word-spacing:0.8px">AL -&nbsp; 9</div>
<div class="c" style="left:557px;width:185px">B</div>
<div class="c" style="left:742px;width:186px"><i class="bimg"><svg width="7" height="7"><path d="M0.8,0.6 L5.6,5.2 M5.6,0.6 L0.8,5.2" stroke="#f00" stroke-width="1.7"/></svg></i></div>
<div class="c" style="left:928px;width:174px"></div>
<div class="c" style="left:1102px;width:186px"></div>
</div>
<div class="rh" style="top:784px"></div>
<div class="row" style="top:784px">
<div class="c" style="left:0px;width:186px">401</div>
<div class="c" style="left:186px;width:185px">ÜMİT KARA</div>
<div class="c" style="left:371px;width:186px;word-spacing:0.8px">AL -&nbsp; 9</div>
<div class="c" style="left:557px;width:185px">B</div>
<div class="c" style="left:742px;width:186px"><i class="bimg"><svg width="7" height="7"><path d="M0.8,0.6 L5.6,5.2 M5.6,0.6 L0.8,5.2" stroke="#f00" stroke-width="1.7"/></svg></i></div>
<div class="c" style="left:928px;width:174px"></div>
<div class="c" style="left:1102px;width:186px"></div>
</div>
<div id="vsb"><div class="up"><svg width="15" height="15" style="position:absolute;left:0;top:0"><path d="M4,11 L4,8.5 L7.5,5 L11,8.5 L11,11 L7.5,7.5 Z" fill="#606060"/></svg></div><div class="thumb"></div><div class="dn"><svg width="15" height="15" style="position:absolute;left:0;top:0"><path d="M4,5 L4,7.5 L7.5,11 L11,7.5 L11,5 L7.5,8.5 Z" fill="#606060"/></svg></div></div>
</div>
</body></html>
